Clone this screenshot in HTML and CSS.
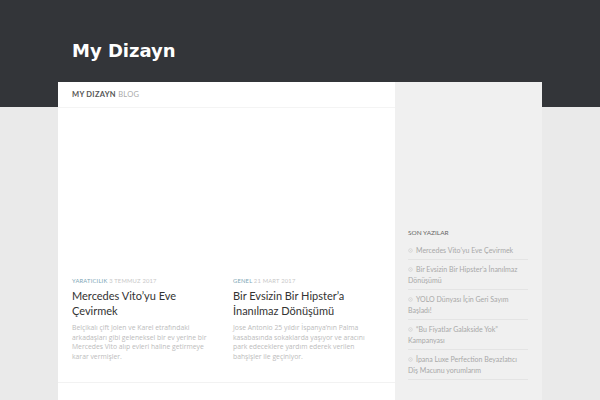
FILE: index.html
```html
<!DOCTYPE html>
<html lang="tr">
<head>
<meta charset="utf-8">
<title>My Dizayn</title>
<link rel="stylesheet" href="styles.css">
</head>
<body>
<header class="site-header">
  <h1 class="site-title">My Dizayn</h1>
</header>
<div class="wrap">
  <main class="main">
    <div class="crumb"><span class="crumb-home">MY DIZAYN</span> <span class="crumb-cur">BLOG</span></div>
    <div class="posts">
      <article class="post">
        <div class="thumb"></div>
        <div class="meta"><span class="cat">YARATICILIK</span> <span class="date">3 TEMMUZ 2017</span></div>
        <h2 class="post-title">Mercedes Vito’yu Eve Çevirmek</h2>
        <p class="excerpt">Belçikalı çift Jolen ve Karel etrafındaki arkadaşları gibi geleneksel bir ev yerine bir Mercedes Vito alıp evleri haline getirmeye karar vermişler.</p>
      </article>
      <article class="post">
        <div class="thumb"></div>
        <div class="meta"><span class="cat">GENEL</span> <span class="date">21 MART 2017</span></div>
        <h2 class="post-title">Bir Evsizin Bir Hipster’a İnanılmaz Dönüşümü</h2>
        <p class="excerpt">Jose Antonio 25 yıldır İspanya’nın Palma kasabasında sokaklarda yaşıyor ve aracını park edeceklere yardım ederek verilen bahşişler ile geçiniyor.</p>
      </article>
    </div>
  </main>
  <aside class="sidebar">
    <h3 class="widget-title">SON YAZILAR</h3>
    <ul class="recent">
      <li><svg class="dot" viewBox="0 0 10 10"><circle cx="5" cy="5" r="3.6" fill="none" stroke="#cfcfcf" stroke-width="1.4"/><circle cx="5" cy="5" r="1.2" fill="#d8d8d8"/></svg>Mercedes Vito’yu Eve Çevirmek</li>
      <li><svg class="dot" viewBox="0 0 10 10"><circle cx="5" cy="5" r="3.6" fill="none" stroke="#cfcfcf" stroke-width="1.4"/><circle cx="5" cy="5" r="1.2" fill="#d8d8d8"/></svg>Bir Evsizin Bir Hipster’a İnanılmaz Dönüşümü</li>
      <li><svg class="dot" viewBox="0 0 10 10"><circle cx="5" cy="5" r="3.6" fill="none" stroke="#cfcfcf" stroke-width="1.4"/><circle cx="5" cy="5" r="1.2" fill="#d8d8d8"/></svg>YOLO Dünyası İçin Geri Sayım Başladı!</li>
      <li><svg class="dot" viewBox="0 0 10 10"><circle cx="5" cy="5" r="3.6" fill="none" stroke="#cfcfcf" stroke-width="1.4"/><circle cx="5" cy="5" r="1.2" fill="#d8d8d8"/></svg>“Bu Fiyatlar Galakside Yok” Kampanyası</li>
      <li><svg class="dot" viewBox="0 0 10 10"><circle cx="5" cy="5" r="3.6" fill="none" stroke="#cfcfcf" stroke-width="1.4"/><circle cx="5" cy="5" r="1.2" fill="#d8d8d8"/></svg>İpana Luxe Perfection Beyazlatıcı Diş Macunu yorumlarım</li>
    </ul>
  </aside>
</div>
</body>
</html>
```

FILE: styles.css
```css
* { box-sizing: border-box; }
html, body { margin: 0; padding: 0; }
body {
  background: #eaeaea;
  font-family: Lato, "Open Sans", "Liberation Sans", sans-serif;
  height: 400px;
  overflow: hidden;
}
.site-header {
  background: #333539;
  height: 107px;
  padding: 38px 0 0 72px;
}
.site-title {
  margin: 0;
  font-family: "DejaVu Sans", sans-serif;
  font-weight: bold;
  font-size: 18px;
  line-height: 26px;
  color: #fff;
}
.wrap {
  display: flex;
  width: 484px;
  margin: -25px 0 0 58px;
  height: 330px;
}
.main {
  width: 337px;
  background: #fff;
}
.crumb {
  height: 26px;
  padding: 8px 14px 0;
  font-size: 7.5px;
  line-height: 10px;
  letter-spacing: 0.3px;
  border-bottom: 1px solid #f4f4f4;
}
.crumb-home { color: #555; font-weight: bold; }
.crumb-cur { color: #aaa; }
.posts {
  display: grid;
  grid-template-columns: 144px 144px;
  column-gap: 17px;
  padding: 0 18px 0 14px;
  height: 275px;
  border-bottom: 1px solid #f2f2f2;
}
.thumb { height: 168px; }
.meta {
  font-size: 5.8px;
  line-height: 10px;
  letter-spacing: 0.2px;
}
.cat { color: #7ea7b6; }
.date { color: #c8c8c8; }
.post-title {
  margin: 3px 0 0;
  font-size: 11px;
  line-height: 14.5px;
  font-weight: normal;
  color: #333;
}
.excerpt {
  margin: 5px 0 0;
  font-family: "Open Sans", Lato, sans-serif;
  font-size: 6.8px;
  line-height: 9.7px;
  color: #bcbcbc;
}
.sidebar {
  width: 147px;
  background: #f0f0f0;
  padding: 146px 14px 0 13px;
}
.widget-title {
  margin: 0 0 2.5px;
  font-size: 6.5px;
  line-height: 10px;
  font-weight: normal;
  color: #666;
}
.recent {
  list-style: none;
  margin: 0;
  padding: 0;
}
.recent li {
  font-size: 7px;
  line-height: 10.5px;
  color: #a8a8a8;
  padding: 4px 0;
  border-bottom: 1px solid #e4e4e4;
}
.dot {
  width: 5px;
  height: 5px;
  margin-right: 3px;
  vertical-align: 0;
}
```
